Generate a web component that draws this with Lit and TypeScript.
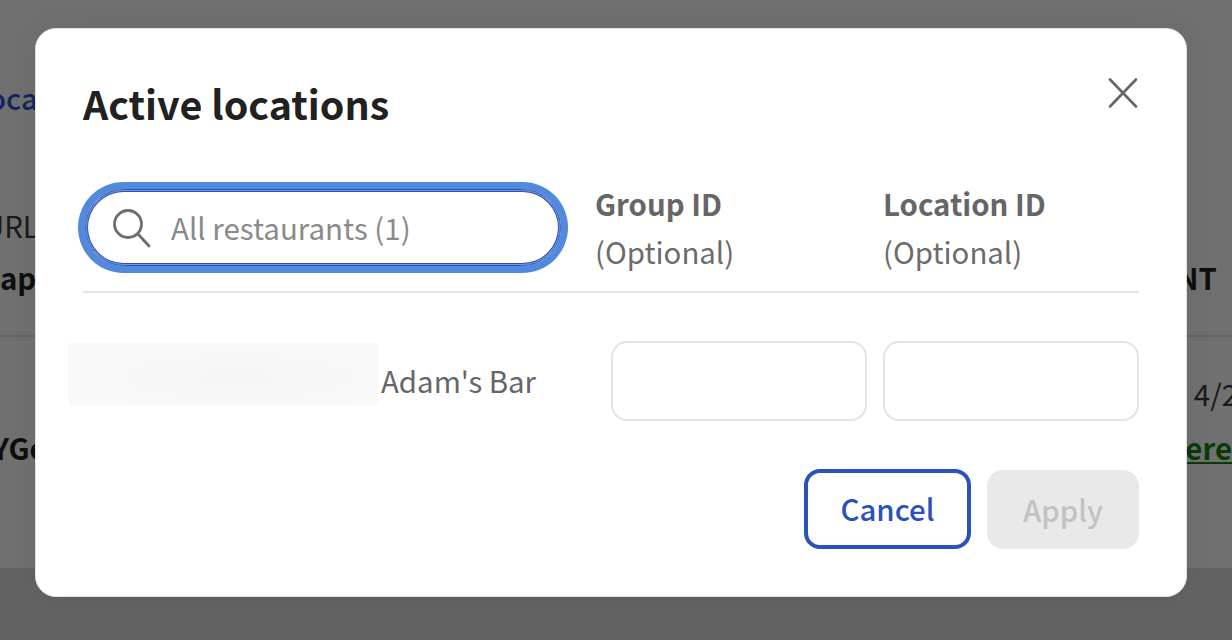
import { LitElement, html, css } from "lit";
import { customElement } from "lit/decorators.js";

@customElement("app-root")
export class AppRoot extends LitElement {
  static styles = css`
    :host { display: block; width: 1232px; height: 640px; position: relative; overflow: hidden; background: #636363;
      font-family: "Noto Sans CJK JP", "Noto Sans", sans-serif; }
    * { box-sizing: border-box; }
    .page { height: 568px; background: #707070; display: flex; flex-direction: column; overflow: hidden; }
    .bg { font-size: 29.4px; line-height: 40px; white-space: nowrap; display: flex; justify-content: space-between; }
    .r1 { margin-top: 77px; color: #14255e; margin-left: -12px; font-weight: 500; }
    .r2 { margin-top: 88px; color: #1a1a1a; margin-left: -17px; }
    .r3 { margin-top: 12px; font-weight: 700; color: #0e0e0e; margin-left: 0; margin-right: 15px; }
    .line { margin-top: 38px; height: 2px; background: #636363; flex: none; }
    .r4 { margin-top: 36px; justify-content: flex-end; color: #1a1a1a; margin-right: -6px; }
    .r5 { margin-top: 14px; font-weight: 700; color: #0e0e0e; margin-left: -8px; margin-right: 0; }
    .link { color: #0a3a0a; text-decoration: underline; }
    .modal { position: absolute; left: 35px; top: 28px; width: 1152px; height: 569px; background: #fff; border-radius: 21px;
      border: 1px solid #e2e2e2; padding: 47px 47px 47px; display: flex; flex-direction: column; box-shadow: 0 0 30px rgba(0,0,0,.06); }
    .title-row { display: flex; justify-content: space-between; align-items: flex-start; height: 59px; }
    h1 { margin: -2px 0 0; font-size: 39.4px; line-height: 58px; font-weight: 700; color: #212121; }
    .close { display: block; margin: 1px 0 0; width: 32px; height: 32px; }
    .head { margin-top: 54px; display: flex; height: 104px; border-bottom: 2px solid #e5e5e5; }
    .search { margin-left: 2px; width: 476px; height: 77px; border-radius: 39px; border: 1px solid #2c50ba;
      box-shadow: inset 0 0 0 1px #7a9ae0, inset 0 0 0 2px #2c50ba, 0 0 0 7px #5189dd;
      display: flex; align-items: center; padding-left: 24px; gap: 20px; color: #8a8a8a; font-size: 29.5px; flex: none; }
    .search svg { flex: none; margin-left: 1px; }
    .search span { margin-top: -2px; }
    .col { font-size: 29.4px; line-height: 48px; color: #6b6b6b; margin-top: -10px; flex: none; }
    .col b { display: block; font-weight: 700; color: #666; }
    .c1 { margin-left: 34px; width: 288px; }
    .row { display: flex; margin-top: 48px; align-items: flex-start; margin-left: -15px; }
    .blur { width: 310px; height: 62px; margin-top: 2px; background: radial-gradient(ellipse at 55% 55%, #f5f5f5, #f9f9f9 70%); flex: none; }
    .name { margin-left: 3px; width: 230px; font-size: 29.4px; line-height: 40px; color: #666; margin-top: 19px; flex: none; }
    .field { width: 256px; height: 80px; border: 2px solid #e3e3e3; border-radius: 16px; flex: none; }
    .f2 { margin-left: 16px; }
    .actions { margin-top: auto; display: flex; justify-content: flex-end; gap: 16px; }
    .btn { height: 80px; border-radius: 16px; font: 500 29.4px/1 "Noto Sans CJK JP", sans-serif; display: flex; align-items: center; justify-content: center; }
    .cancel { width: 167px; background: #fff; border: 4px solid #2b52bb; color: #2b52bb; }
    .apply { width: 152px; background: #e9e9e9; color: #c2c2c2; border: none; height: 79px; margin-top: 1px; }
  `;

  render() {
    return html`
      <div class="page">
        <div class="bg r1"><span>oca</span></div>
        <div class="bg r2"><span>URL</span></div>
        <div class="bg r3"><span>ap</span><span>NT</span></div>
        <div class="line"></div>
        <div class="bg r4"><span>4/2</span></div>
        <div class="bg r5"><span>YGo</span><span class="link">here</span></div>
      </div>
      <div class="modal">
        <div class="title-row">
          <h1>Active locations</h1>
          <svg class="close" viewBox="0 0 32 32" fill="none" stroke="#666" stroke-width="2.6" stroke-linecap="round">
            <path d="M3 2.5 L29 29.5 M29 2.5 L3 29.5" />
          </svg>
        </div>
        <div class="head">
          <div class="search">
            <svg width="40" height="40" viewBox="0 0 40 40" fill="none" stroke="#6e6e6e" stroke-width="2.8" stroke-linecap="round">
              <circle cx="17" cy="16" r="13.5" />
              <path d="M27 26 L38 38" />
            </svg>
            <span>All restaurants (1)</span>
          </div>
          <div class="col c1"><b>Group ID</b>(Optional)</div>
          <div class="col"><b>Location ID</b>(Optional)</div>
        </div>
        <div class="row">
          <div class="blur"></div>
          <div class="name">Adam's Bar</div>
          <div class="field"></div>
          <div class="field f2"></div>
        </div>
        <div class="actions">
          <div class="btn cancel">Cancel</div>
          <div class="btn apply">Apply</div>
        </div>
      </div>
    `;
  }
}
